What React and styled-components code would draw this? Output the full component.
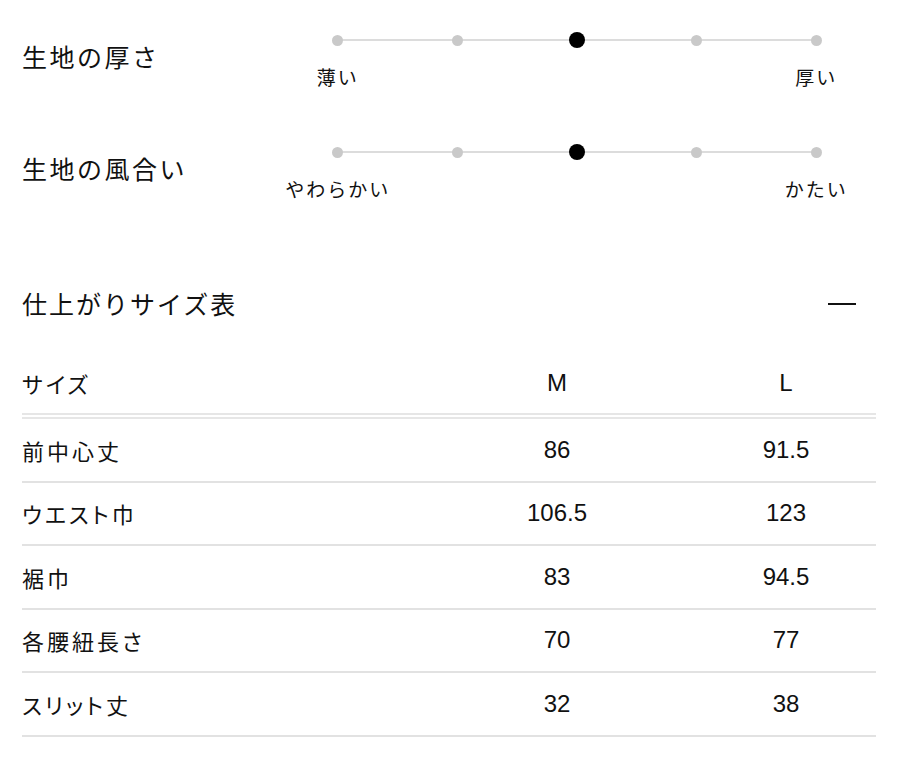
import styled, { createGlobalStyle } from "styled-components";

const GlobalStyle = createGlobalStyle`
  html, body {
    margin: 0;
    padding: 0;
    background: #fff;
  }
  body {
    font-family: "Liberation Sans", "Noto Sans CJK JP", sans-serif;
    color: #111;
  }
`;

const attributes = [
  { title: "生地の厚さ", low: "薄い", high: "厚い", value: 2 },
  { title: "生地の風合い", low: "やわらかい", high: "かたい", value: 2 },
];

const sizeRows = [
  { label: "前中心丈", m: "86", l: "91.5" },
  { label: "ウエスト巾", m: "106.5", l: "123" },
  { label: "裾巾", m: "83", l: "94.5" },
  { label: "各腰紐長さ", m: "70", l: "77" },
  { label: "スリット丈", m: "32", l: "38" },
];

const Scale = ({ low, high, value }) => {
  return (
    <ScaleWrap>
      <Track>
        {[0, 1, 2, 3, 4].map((step) => (
          <StepCell key={step}>
            <Dot active={step === value} />
          </StepCell>
        ))}
      </Track>
      <Labels>
        <ScaleLabel>{low}</ScaleLabel>
        <span />
        <span />
        <span />
        <ScaleLabel>{high}</ScaleLabel>
      </Labels>
    </ScaleWrap>
  );
};

const App = () => {
  return (
    <Page>
      <GlobalStyle />
      <Attributes>
        {attributes.map((attr) => (
          <AttrRow key={attr.title}>
            <AttrTitle>{attr.title}</AttrTitle>
            <Scale low={attr.low} high={attr.high} value={attr.value} />
          </AttrRow>
        ))}
      </Attributes>

      {/* size chart */}
      <SectionHead>
        <SectionTitle>仕上がりサイズ表</SectionTitle>
        <Collapse aria-label="close" />
      </SectionHead>

      <Table>
        <HeadRow>
          <Label>サイズ</Label>
          <Value>M</Value>
          <Value>L</Value>
        </HeadRow>
        {sizeRows.map((row) => (
          <Row key={row.label}>
            <Label>{row.label}</Label>
            <Value>{row.m}</Value>
            <Value>{row.l}</Value>
          </Row>
        ))}
      </Table>
    </Page>
  );
};

const Page = styled.main`
  width: 854px;
  padding: 32px 30px 20px 22px;
`;

const Attributes = styled.section`
  display: flex;
  flex-direction: column;
`;

const AttrRow = styled.div`
  display: grid;
  grid-template-columns: 256px 1fr;
  height: 112px;
`;

const AttrTitle = styled.h3`
  margin: 7px 0 0;
  font-family: "Noto Sans CJK JP", sans-serif;
  font-weight: 400;
  font-size: 25px;
  line-height: 34px;
  letter-spacing: 2.5px;
  color: #111;
`;

const ScaleWrap = styled.div`
  display: flex;
  flex-direction: column;
`;

const Track = styled.div`
  position: relative;
  display: grid;
  grid-template-columns: repeat(5, 1fr);
  height: 16px;

  &::before {
    content: "";
    position: absolute;
    left: 10%;
    right: 10%;
    top: 7px;
    height: 2px;
    background: #dcdcdc;
  }
`;

const StepCell = styled.div`
  display: flex;
  align-items: center;
  justify-content: center;
  position: relative;
`;

const Dot = styled.span`
  display: block;
  width: ${(p) => (p.active ? "16px" : "11px")};
  height: ${(p) => (p.active ? "16px" : "11px")};
  border-radius: 50%;
  background: ${(p) => (p.active ? "#000" : "#c9c9c9")};
`;

const Labels = styled.div`
  display: grid;
  grid-template-columns: repeat(5, 1fr);
  margin-top: 18px;
`;

const ScaleLabel = styled.span`
  justify-self: center;
  white-space: nowrap;
  font-family: "Noto Sans CJK JP", sans-serif;
  font-size: 19px;
  line-height: 22px;
  letter-spacing: 2px;
  color: #111;
`;

const SectionHead = styled.div`
  display: flex;
  align-items: center;
  justify-content: space-between;
  margin-top: 30px;
  padding-right: 20px;
`;

const SectionTitle = styled.h2`
  margin: 0;
  font-family: "Noto Sans CJK JP", sans-serif;
  font-weight: 400;
  font-size: 25px;
  line-height: 34px;
  letter-spacing: 2px;
  color: #111;
`;

const Collapse = styled.button`
  width: 28px;
  height: 2px;
  padding: 0;
  border: none;
  background: #111;
  margin-top: 2px;
`;

const Table = styled.div`
  margin-top: 32px;
  display: flex;
  flex-direction: column;
`;

const Row = styled.div`
  display: grid;
  grid-template-columns: 396px 278px 180px;
  align-items: center;
  height: 63.5px;
  box-sizing: border-box;
  border-bottom: 2px solid #e2e2e2;
`;

const HeadRow = styled(Row)`
  height: 67px;
  border-bottom: 6px double #e6e6e6;
`;

const Label = styled.span`
  font-family: "Noto Sans CJK JP", sans-serif;
  font-feature-settings: "palt";
  font-size: 22px;
  letter-spacing: 3px;
  color: #111;
`;

const Value = styled.span`
  text-align: center;
  font-family: "Liberation Sans", Arial, sans-serif;
  font-size: 24px;
  color: #111;
`;

export default App;
